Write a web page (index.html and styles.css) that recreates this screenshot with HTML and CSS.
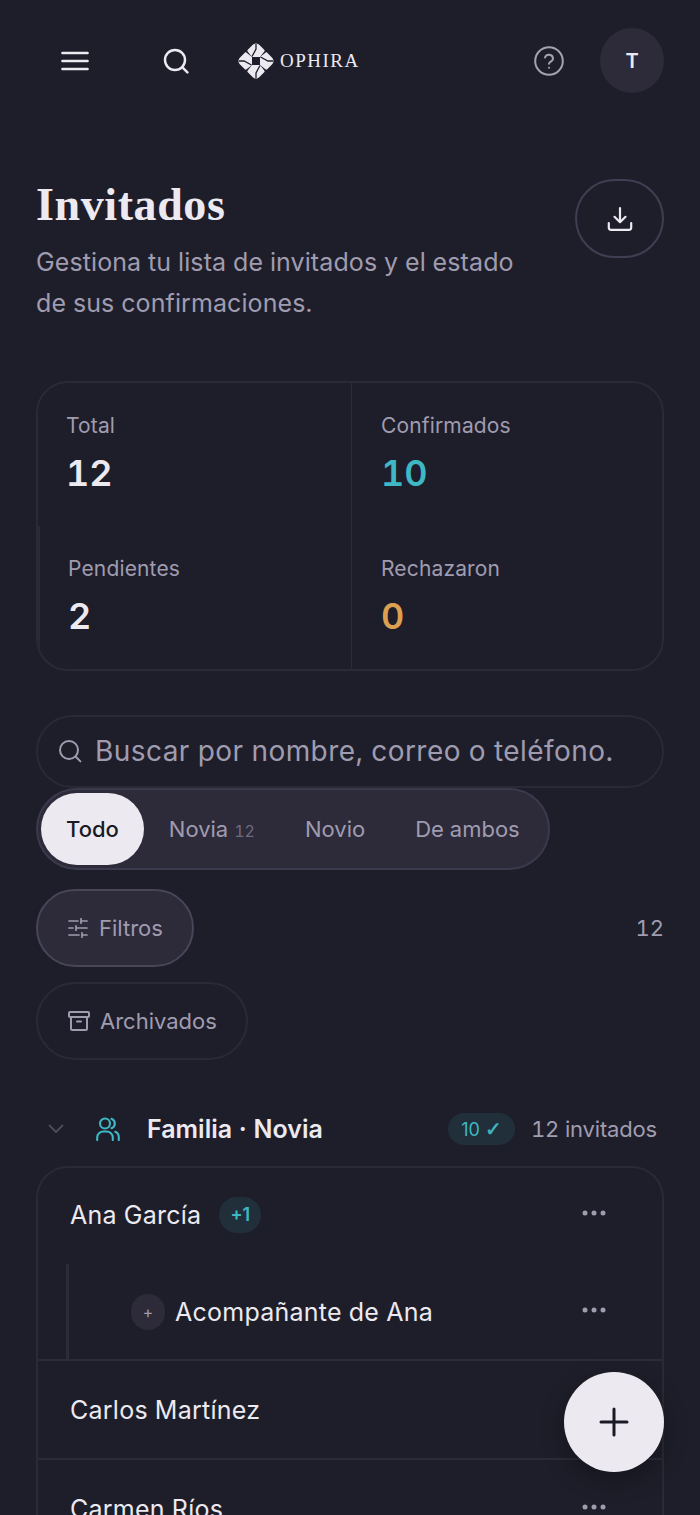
FILE: index.html
```html
<!doctype html>
<html lang="es">
    <head>
        <meta charset="UTF-8" />
        <meta name="viewport" content="width=device-width, initial-scale=1.0" />
        <title>Invitados</title>
        <link rel="stylesheet" href="styles.css">
    </head>
    <body>
        <!-- Top bar -->
        <header class="topbar">
            <button class="icon-btn menu-btn" aria-label="Menu">
                <svg width="28" height="20" viewBox="0 0 28 20" fill="none" stroke="currentColor" stroke-width="2.6" stroke-linecap="round">
                    <path d="M1.5 2h25M1.5 10h25M1.5 18h25" />
                </svg>
            </button>
            <button class="icon-btn search-btn" aria-label="Buscar">
                <svg width="26" height="26" viewBox="0 0 26 26" fill="none" stroke="currentColor" stroke-width="2.4" stroke-linecap="round">
                    <circle cx="12" cy="12" r="10" />
                    <path d="M19.4 19.4l5 5" />
                </svg>
            </button>
            <div class="logo">
                <svg width="36" height="36" viewBox="0 0 36 36" fill="#eceaf0">
                    <path d="M18 .5c1.500 0 2.700.8 3.700 1.800l4.500 4.500c.6.6.6 1.300.1 1.800L22 14h-8L9.700 8.600c-.5-.5-.5-1.200.1-1.800l4.500-4.500c1-1 2.200-1.800 3.700-1.800z" />
                    <path d="M18 35.500c-1.500 0-2.700-.8-3.700-1.800l-4.500-4.500c-.6-.6-.6-1.300-.1-1.800L14 22h8l4.300 5.400c.5.5.5 1.200-.1 1.800l-4.500 4.500c-1 1-2.200 1.800-3.700 1.800z" />
                    <path d="M.5 18c0-1.500.8-2.700 1.800-3.700l4.500-4.500c.6-.6 1.300-.6 1.800-.1L14 14v8l-5.400 4.300c-.5.5-1.200.5-1.800-.1l-4.500-4.500C1.300 20.700.5 19.500.5 18z" />
                    <path d="M35.500 18c0 1.500-.8 2.700-1.800 3.700l-4.500 4.500c-.6.6-1.300.6-1.800.1L22 22v-8l5.400-4.300c.5-.5 1.200-.5 1.800.1l4.500 4.500c1 1 1.800 2.200 1.800 3.700z" />
                    <path d="M18 1v5l-4 7.500M18 35v-5l4-7.500M1 18h5l7.500 4M35 18h-5l-7.500-4" fill="none" stroke="#1e1e2a" stroke-width="1.300" />
                </svg>
                <span class="logo-name">OPHIRA</span>
            </div>
            <button class="icon-btn help-btn" aria-label="Ayuda">
                <svg width="30" height="30" viewBox="0 0 30 30" fill="none" stroke="currentColor" stroke-width="2" stroke-linecap="round" stroke-linejoin="round">
                    <circle cx="15" cy="15" r="13.800" />
                    <path d="M11 11.500a4.100 4.100 0 0 1 8 1.200c0 2.700-4 3-4 5" />
                    <path d="M15 21.800h.01" />
                </svg>
            </button>
            <div class="avatar">T</div>
        </header>

        <!-- Page title -->
        <section class="page-head">
            <div class="page-text">
                <h1>Invitados</h1>
                <p>Gestiona tu lista de invitados y el estado de sus confirmaciones.</p>
            </div>
            <button class="download-btn" aria-label="Descargar">
                <svg width="26" height="26" viewBox="0 0 26 26" fill="none" stroke="currentColor" stroke-width="2.200" stroke-linecap="round" stroke-linejoin="round">
                    <path d="M13 2v14M7.500 10.800L13 16.200l5.500-5.400" />
                    <path d="M1.800 17v4.500c0 1.300 1 2.300 2.300 2.300h17.800c1.300 0 2.300-1 2.300-2.300V17" />
                </svg>
            </button>
        </section>

        <!-- Stats -->
        <section class="stats">
            <div class="stat stat-right-line stat-total">
                <span class="stat-label">Total</span>
                <strong class="stat-value">12</strong>
            </div>
            <div class="stat">
                <span class="stat-label">Confirmados</span>
                <strong class="stat-value teal">10</strong>
            </div>
            <div class="stat stat-right-line stat-pending">
                <span class="stat-label">Pendientes</span>
                <strong class="stat-value">2</strong>
            </div>
            <div class="stat">
                <span class="stat-label">Rechazaron</span>
                <strong class="stat-value orange">0</strong>
            </div>
        </section>

        <!-- Search and filters -->
        <div class="search-box">
            <svg width="24" height="24" viewBox="0 0 24 24" fill="none" stroke="currentColor" stroke-width="2" stroke-linecap="round">
                <circle cx="11" cy="11" r="9" />
                <path d="M17.800 17.800l4.600 4.600" />
            </svg>
            <span>Buscar por nombre, correo o teléfono.</span>
        </div>

        <div class="tabs">
            <span class="tab active">Todo</span>
            <span class="tab">Novia <small>12</small></span>
            <span class="tab">Novio</span>
            <span class="tab">De ambos</span>
        </div>

        <div class="filter-row">
            <button class="pill pill-filled">
                <svg width="20" height="20" viewBox="0 0 20 20" fill="none" stroke="currentColor" stroke-width="1.700" stroke-linecap="round">
                    <path d="M1 3h9M13 3h6M13 .8v4.400M1 10h4M8 10h11M8 7.800v4.400M1 17h10M14 17h5M14 14.800v4.400" />
                </svg>
                Filtros
            </button>
            <span class="filter-count">12</span>
        </div>

        <button class="pill pill-archive">
            <svg width="22" height="22" viewBox="0 0 22 22" fill="none" stroke="currentColor" stroke-width="2" stroke-linecap="round" stroke-linejoin="round">
                <rect x="1" y="2" width="20" height="5" rx="1" />
                <path d="M3 7v11.500c0 1 .8 1.500 1.500 1.500h13c.7 0 1.500-.5 1.500-1.500V7M9 11.500h4" />
            </svg>
            Archivados
        </button>

        <!-- Guest group -->
        <div class="group-head">
            <svg class="chevron" width="16" height="10" viewBox="0 0 16 10" fill="none" stroke="currentColor" stroke-width="1.800" stroke-linecap="round" stroke-linejoin="round">
                <path d="M1.500 1.500L8 8l6.500-6.500" />
            </svg>
            <svg class="group-icon" width="24" height="24" viewBox="0 0 24 24" fill="none" stroke="currentColor" stroke-width="2.100" stroke-linecap="round" stroke-linejoin="round">
                <circle cx="9" cy="6.500" r="5" />
                <path d="M1.200 23v-2.500c0-3.500 2.800-6 6.300-6h3c3.500 0 6.300 2.500 6.300 6V23" />
                <path d="M15.500 1.800a5 5 0 0 1 0 9.400M19.300 14.800c2.100.8 3.500 2.900 3.500 5.500V23" />
            </svg>
            <span class="group-name">Familia · Novia</span>
            <span class="confirmed-badge">10<span class="check">✓</span></span>
            <span class="group-total">12 invitados</span>
        </div>

        <div class="guest-list">
            <div class="guest">
                <div class="guest-row first-row">
                    <span class="guest-name">Ana García</span>
                    <span class="plus-badge">+1</span>
                    <svg class="dots" width="24" height="6" viewBox="0 0 24 6" fill="currentColor"><circle cx="3" cy="3" r="2.500" /><circle cx="12" cy="3" r="2.500" /><circle cx="21" cy="3" r="2.500" /></svg>
                </div>
                <div class="guest-row companion-row">
                    <span class="companion-mark">+</span>
                    <span class="guest-name">Acompañante de Ana</span>
                    <svg class="dots" width="24" height="6" viewBox="0 0 24 6" fill="currentColor"><circle cx="3" cy="3" r="2.500" /><circle cx="12" cy="3" r="2.500" /><circle cx="21" cy="3" r="2.500" /></svg>
                </div>
            </div>
            <div class="guest">
                <div class="guest-row">
                    <span class="guest-name">Carlos Martínez</span>
                    <svg class="dots" width="24" height="6" viewBox="0 0 24 6" fill="currentColor"><circle cx="3" cy="3" r="2.500" /><circle cx="12" cy="3" r="2.500" /><circle cx="21" cy="3" r="2.500" /></svg>
                </div>
            </div>
            <div class="guest">
                <div class="guest-row">
                    <span class="guest-name">Carmen Ríos</span>
                    <svg class="dots" width="24" height="6" viewBox="0 0 24 6" fill="currentColor"><circle cx="3" cy="3" r="2.500" /><circle cx="12" cy="3" r="2.500" /><circle cx="21" cy="3" r="2.500" /></svg>
                </div>
            </div>
        </div>

        <!-- Add guest button -->
        <button class="fab" aria-label="Agregar invitado">
            <svg width="30" height="30" viewBox="0 0 30 30" fill="none" stroke="currentColor" stroke-width="3" stroke-linecap="round">
                <path d="M15 2v26M2 15h26" />
            </svg>
        </button>
    </body>
</html>
```

FILE: styles.css
```css
* {
    box-sizing: border-box;
}

html,
body {
    height: 1515px;
    overflow: hidden;
}

body {
    margin: 0;
    padding: 0 36px;
    font-family: Inter, "Noto Sans", sans-serif;
    font-variant-numeric: tabular-nums;
    background-color: #1e1e2a;
    color: #eceaf0;
    position: relative;
}

button {
    font-family: inherit;
    background: none;
    border: none;
    padding: 0;
    color: inherit;
}

/* Top bar */
.topbar {
    display: flex;
    align-items: center;
    padding-top: 28px;
    height: 93px;
}

.icon-btn {
    display: flex;
    align-items: center;
    justify-content: center;
}

.menu-btn {
    width: 78px;
    height: 64px;
}

.search-btn {
    width: 80px;
    height: 64px;
    margin-left: 22px;
}

.logo {
    display: flex;
    align-items: center;
    gap: 6px;
    margin-left: 22px;
}

.logo-name {
    font-family: "Liberation Serif", serif;
    font-size: 19px;
    letter-spacing: 1.5px;
}

.help-btn {
    margin-left: auto;
    width: 30px;
    height: 64px;
    color: #a5a1b3;
}

.avatar {
    width: 64px;
    height: 65px;
    margin-left: 36px;
    border-radius: 50%;
    background-color: #2d2a3a;
    display: flex;
    align-items: center;
    justify-content: center;
    font-size: 20px;
    font-weight: 600;
}

/* Page title */
.page-head {
    display: flex;
    justify-content: space-between;
    align-items: flex-start;
    margin-top: 86px;
}

.page-text {
    width: 490px;
}

h1 {
    font-family: "Liberation Serif", serif;
    font-size: 46px;
    font-weight: 700;
    line-height: 52px;
    letter-spacing: 0.6px;
    margin: 0;
}

p {
    margin: 11px 0 0;
    font-size: 25px;
    line-height: 41px;
    letter-spacing: 0.1px;
    color: #a09cb0;
}

.download-btn {
    width: 89px;
    height: 79px;
    border: 2px solid #403e52;
    border-radius: 40px;
    display: flex;
    align-items: center;
    justify-content: center;
}

/* Stats */
.stats {
    display: grid;
    grid-template-columns: 314px 1fr;
    grid-template-rows: 1fr 1fr;
    margin-top: 57px;
    height: 290px;
    border: 2px solid #2a2936;
    border-radius: 32px;
    overflow: hidden;
}

.stat {
    display: flex;
    flex-direction: column;
    padding: 29px 0 0 29px;
}

.stat-total {
    padding-left: 28px;
}

.stat-right-line {
    border-right: 1px solid #2c2b39;
}

.stat-pending {
    border-left: 2px solid #2a2936;
    padding-left: 28px;
}

.stat-label {
    font-size: 21px;
    line-height: 28px;
    letter-spacing: 0.15px;
    color: #a09cb0;
}

.stat-value {
    font-size: 36px;
    font-weight: 600;
    line-height: 44px;
    margin-top: 11px;
}

.teal {
    color: #3db8c4;
}

.orange {
    color: #dca050;
}

/* Search and filters */
.search-box {
    display: flex;
    align-items: center;
    gap: 13px;
    height: 73px;
    margin-top: 44px;
    padding-left: 20px;
    padding-bottom: 1px;
    border: 2px solid #2a2936;
    border-radius: 37px;
    font-size: 28px;
    letter-spacing: 0.43px;
    color: #a09cb0;
}

.tabs {
    display: inline-flex;
    align-items: center;
    height: 82px;
    padding: 0 3px;
    border: 2px solid #3b394c;
    border-radius: 41px;
    background-color: #2d2a3a;
    font-size: 22px;
    color: #a09cb0;
}

.tab {
    display: flex;
    align-items: baseline;
    gap: 6px;
    height: 72px;
    line-height: 72px;
    padding: 0 25px;
    border-radius: 36px;
}

.tab small {
    font-size: 16px;
    color: #6f6b7e;
}

.tab.active {
    background-color: #eceaf0;
    color: #1a1a24;
    font-weight: 500;
}

.filter-row {
    display: flex;
    justify-content: space-between;
    align-items: center;
    margin-top: 19px;
}

.pill {
    display: flex;
    align-items: center;
    height: 78px;
    border-radius: 39px;
    font-size: 22px;
    color: #a09cb0;
}

.pill-filled {
    gap: 11px;
    width: 158px;
    padding-left: 30px;
    background-color: #2d2a3a;
    border: 2px solid #474558;
}

.pill-archive {
    gap: 10px;
    width: 212px;
    margin-top: 15px;
    padding-left: 30px;
    border: 2px solid #2a2936;
}

.filter-count {
    font-size: 22px;
    color: #a09cb0;
}

/* Guest group */
.group-head {
    display: flex;
    align-items: center;
    height: 34px;
    margin-top: 52px;
}

.chevron {
    margin-left: 12px;
    color: #4d4b5e;
}

.group-icon {
    margin-left: 32px;
    color: #3db8c4;
}

.group-name {
    margin-left: 27px;
    font-size: 25px;
    font-weight: 600;
}

.confirmed-badge {
    margin-left: auto;
    display: flex;
    align-items: center;
    justify-content: center;
    gap: 5px;
    width: 67px;
    height: 32px;
    border-radius: 16px;
    background-color: #212f3b;
    color: #3db8c4;
    font-size: 18px;
    font-variant-numeric: normal;
}

.check {
    font-family: "DejaVu Sans", sans-serif;
    font-size: 20px;
    -webkit-text-stroke: 0.5px #3db8c4;
}

.group-total {
    margin-left: 16px;
    margin-right: 7px;
    font-size: 22px;
    letter-spacing: -0.17px;
    color: #a09cb0;
}

.guest-list {
    margin-top: 20px;
    border: 2px solid #2a2936;
    border-bottom: none;
    border-radius: 32px 32px 0 0;
}

.guest + .guest {
    border-top: 2px solid #2c2b39;
}

.guest-row {
    display: flex;
    align-items: center;
    height: 97px;
    padding: 0 56px 0 32px;
}

.first-row {
    height: 96px;
    padding-bottom: 2px;
}

.guest-name {
    font-size: 25px;
    letter-spacing: 0.25px;
}

.plus-badge {
    margin-left: 18px;
    width: 42px;
    height: 36px;
    line-height: 36px;
    text-align: center;
    border-radius: 18px;
    background-color: #212f3b;
    color: #3db8c4;
    font-size: 18px;
    font-weight: 600;
    font-variant-numeric: normal;
}

.dots {
    margin-left: auto;
    margin-top: -4px;
    color: #a09cb0;
}

.companion-row {
    height: 95px;
    margin-left: 28px;
    padding-left: 62px;
    padding-right: 56px;
    border-left: 3px solid #2c2b39;
}

.companion-mark {
    width: 34px;
    height: 36px;
    line-height: 36px;
    margin-right: 10px;
    text-align: center;
    border-radius: 18px;
    background-color: #2d2a3a;
    color: #a09cb0;
    font-size: 16px;
}

/* Add guest button */
.fab {
    position: absolute;
    left: 564px;
    top: 1372px;
    width: 100px;
    height: 100px;
    border-radius: 50%;
    background-color: #eceaf0;
    color: #1a1a24;
    display: flex;
    align-items: center;
    justify-content: center;
    box-shadow: 0 8px 24px rgba(0, 0, 0, 0.3);
}
```
